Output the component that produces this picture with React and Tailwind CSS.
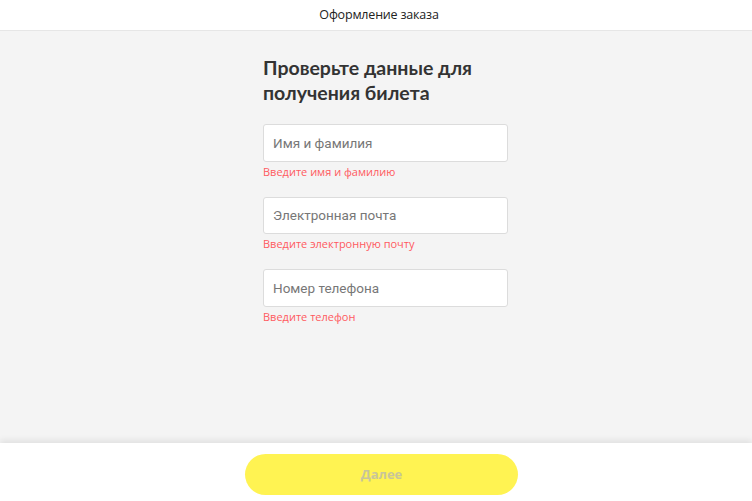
export default function App() {
  const fields = [
    { placeholder: 'Имя и фамилия', error: 'Введите имя и фамилию' },
    { placeholder: 'Электронная почта', error: 'Введите электронную почту' },
    { placeholder: 'Номер телефона', error: 'Введите телефон' },
  ];

  return (
    <div className="flex h-[501px] flex-col bg-white font-['Open_Sans',sans-serif] text-[#222]">
      {/* шапка */}
      <header className="flex h-[31px] shrink-0 items-center justify-center border-b border-[#e6e6e6] bg-white pl-[6px]">
        <span className="text-[12.5px] tracking-[-0.2px] text-[#222]">Оформление заказа</span>
      </header>

      {/* форма */}
      <main className="flex-1 bg-[#f4f4f4] pl-[11px]">
        <div className="mx-auto w-[273px] pl-[18px] pt-[24px]">
          <h1 className="w-[245px] font-['Lato',sans-serif] text-[19.5px] font-bold leading-[25px] text-[#333]">
            Проверьте данные для получения билета
          </h1>
          <div className="mt-[19px] flex flex-col">
            {fields.map((f) => (
              <div key={f.placeholder} className="h-[72.5px]">
                <input
                  type="text"
                  placeholder={f.placeholder}
                  className="h-[37.5px] w-[245px] rounded-[3px] border border-[#dcdcdc] bg-white px-[9px] font-['Roboto',sans-serif] text-[13.5px] text-[#222] outline-none placeholder:text-[#777]"
                />
                <p className="mt-[3px] text-[11px] leading-[14px] text-[#ff5a5f]">{f.error}</p>
              </div>
            ))}
          </div>
        </div>
      </main>

      {/* подвал с кнопкой */}
      <footer className="flex h-[58px] shrink-0 justify-center bg-white pl-[11px] pt-[11px] shadow-[0_-3px_6px_rgba(0,0,0,0.08)]">
        <button
          disabled
          className="h-[41px] w-[273px] rounded-full bg-[#fff352] text-[13px] font-bold text-[#c8c59a]"
        >
          Далее
        </button>
      </footer>
    </div>
  );
}
